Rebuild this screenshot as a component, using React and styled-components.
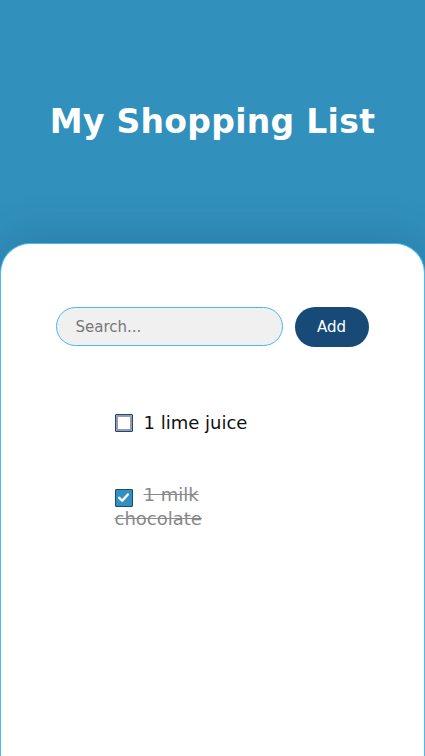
import React, { useState } from "react";
import styled, { createGlobalStyle } from "styled-components";

const GlobalStyle = createGlobalStyle`
  html, body {
    margin: 0;
    padding: 0;
    background: #3190bc;
    font-family: "DejaVu Sans", "Open Sans", sans-serif;
    overflow: hidden;
  }
`;

const Page = styled.div`
  width: 425px;
  height: 756px;
  display: flex;
  flex-direction: column;
  background: #3190bc;
  overflow: hidden;
`;

const Header = styled.header`
  height: 243px;
  flex-shrink: 0;
  display: flex;
  justify-content: center;
  padding-top: 102px;
  box-sizing: border-box;
`;

const Title = styled.h1`
  margin: 0;
  color: #fff;
  font-size: 33px;
  font-weight: 700;
  letter-spacing: 0.3px;
  height: 40px;
`;

const Card = styled.main`
  flex: 1;
  background: #fff;
  border: 1px solid #4ab9ef;
  border-bottom: none;
  border-radius: 30px 30px 0 0;
  box-shadow: 0 -6px 40px rgba(20, 60, 90, 0.22);
  padding: 63px 0 0;
  display: flex;
  flex-direction: column;
  align-items: center;
`;

const Form = styled.form`
  display: flex;
  gap: 12px;
  margin-left: -1px;
`;

const Search = styled.input`
  width: 227px;
  height: 39px;
  box-sizing: border-box;
  border: 1px solid #4ab9ef;
  border-radius: 20px;
  background: #f0f0f0;
  padding: 0 19px;
  font-family: inherit;
  font-size: 15px;
  color: #333;
  outline: none;

  &::placeholder {
    color: #777;
  }
`;

const AddButton = styled.button`
  width: 74px;
  height: 40px;
  border: none;
  border-radius: 20px;
  background: #184a78;
  color: #fff;
  font-family: inherit;
  font-size: 15px;
`;

const List = styled.ul`
  list-style: none;
  margin: 64px 0 0;
  padding: 0;
  width: 140px;
  margin-left: -56px;
`;

const Item = styled.li`
  font-size: 18px;
  line-height: 23px;
  margin-bottom: 49px;
  color: ${(p) => (p.done ? "#888" : "#111")};
  text-decoration: ${(p) => (p.done ? "line-through" : "none")};
`;

const HiddenInput = styled.input`
  display: none;
`;

const Box = styled.span`
  display: inline-flex;
  align-items: center;
  justify-content: center;
  width: 18px;
  height: 18px;
  box-sizing: border-box;
  margin-right: 11px;
  vertical-align: -3px;
  border: 1px solid #1c4a78;
  border-radius: 1px;
  background: ${(p) => (p.checked ? "#3190c0" : "#fff")};
  box-shadow: ${(p) => (p.checked ? "none" : "inset 0 0 0 2px #9b9aa8")};
  cursor: pointer;
`;

const items = [
  { id: 1, name: "1 lime juice", done: false },
  { id: 2, name: "1 milk chocolate", done: true },
];

export default function App() {
  const [list, setList] = useState(items);
  const toggle = (id) =>
    setList(list.map((i) => (i.id === id ? { ...i, done: !i.done } : i)));

  return (
    <Page>
      <GlobalStyle />
      <Header>
        <Title>My Shopping List</Title>
      </Header>
      <Card>
        <Form onSubmit={(e) => e.preventDefault()}>
          <Search placeholder="Search..." />
          <AddButton type="submit">Add</AddButton>
        </Form>
        <List>
          {list.map((item) => (
            <Item key={item.id} done={item.done}>
              <label>
                <HiddenInput
                  type="checkbox"
                  checked={item.done}
                  onChange={() => toggle(item.id)}
                />
                <Box checked={item.done}>
                  {item.done && (
                    <svg width="13" height="13" viewBox="0 0 12 12">
                      <path
                        d="M2 6.3 L4.8 9 L10 3.2"
                        fill="none"
                        stroke="#fff"
                        strokeWidth="2.2"
                        strokeLinecap="round"
                        strokeLinejoin="round"
                      />
                    </svg>
                  )}
                </Box>
              </label>
              {item.name}
            </Item>
          ))}
        </List>
      </Card>
    </Page>
  );
}
